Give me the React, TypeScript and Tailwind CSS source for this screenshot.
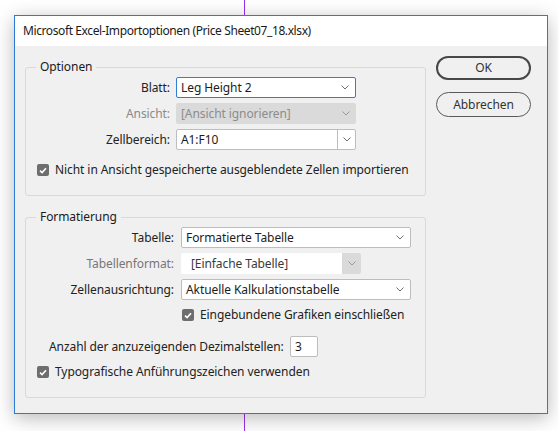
import React from "react";

function Chevron({ color = "#6b6b6b" }: { color?: string }) {
  return (
    <svg width="8" height="5" viewBox="0 0 8 5" className="shrink-0">
      <polyline points="0.5,0.5 4,4 7.5,0.5" fill="none" stroke={color} strokeWidth="1" />
    </svg>
  );
}

function Check() {
  return (
    <span className="w-[12px] h-[12px] rounded-[2px] bg-[#6e6e6e] flex items-center justify-center shrink-0">
      <svg width="8" height="7" viewBox="0 0 8 7">
        <polyline points="1,3.6 3.1,5.6 7,1.2" fill="none" stroke="#fff" strokeWidth="1.6" />
      </svg>
    </span>
  );
}

function Select({ value, width, focused }: { value: string; width: string; focused?: boolean }) {
  return (
    <div
      className={`${width} h-[21px] bg-white rounded-[2px] border flex items-center justify-between pl-[4px] pr-[6px] ${
        focused ? "border-[#2f7fd6]" : "border-[#bdbdbd]"
      }`}
    >
      <span className="text-[#1c1c1c]">{value}</span>
      <Chevron />
    </div>
  );
}

export default function App() {
  return (
    <div
      className="relative w-[558px] h-[431px] bg-white overflow-hidden pt-[15px] pl-[14px] text-[12px] leading-[16px] tracking-[-0.08px] text-[#222]"
      style={{ fontFamily: '"Noto Sans", "Open Sans", sans-serif' }}
    >
      {/* guide line behind the dialog */}
      <div className="absolute left-[244px] top-0 bottom-0 w-px bg-[#9b30f0]" />

      <div className="relative w-[534px] h-[399px] border border-[#2b7bd6] bg-[#f0f0f0] shadow-[0_4px_18px_rgba(0,0,0,0.28)] flex flex-col">
        <div className="h-[30px] bg-white pl-[8px] flex items-center text-[#1a1a1a] tracking-[-0.4px]">
          Microsoft Excel-Importoptionen (Price Sheet07_18.xlsx)
        </div>

        <div className="flex pl-[10px]">
          <div className="w-[401px] pt-[13px] flex flex-col gap-[13px]">
            {/* Optionen */}
            <fieldset className="h-[137px] border border-[#d9d9d9] rounded-[3px] pl-[10px]">
              <legend className="px-[4px] text-[#1a1a1a]">Optionen</legend>
              <div className="pt-[2px] flex flex-col gap-[5px]">
                <div className="flex items-center">
                  <span className="w-[134px] text-right">Blatt:</span>
                  <div className="ml-[6px]">
                    <Select value="Leg Height 2" width="w-[180px]" focused />
                  </div>
                </div>
                <div className="flex items-center">
                  <span className="w-[134px] text-right text-[#8a8a8a]">Ansicht:</span>
                  <div className="ml-[6px] w-[180px] h-[21px] rounded-[2px] bg-[#dadada] flex items-center justify-between pl-[5px] pr-[6px]">
                    <span className="text-[#8c8c8c]">[Ansicht ignorieren]</span>
                    <Chevron color="#9a9a9a" />
                  </div>
                </div>
                <div className="flex items-center">
                  <span className="w-[134px] text-right">Zellbereich:</span>
                  <div className="ml-[6px] w-[180px] h-[21px] rounded-[2px] border border-[#bdbdbd] bg-white flex">
                    <span className="flex-1 pl-[4px] flex items-center text-[#1c1c1c]">A1:F10</span>
                    <span className="w-[18px] border-l border-[#bdbdbd] flex items-center justify-center">
                      <Chevron />
                    </span>
                  </div>
                </div>
                <div className="flex items-center gap-[6px] ml-[1px] mt-[7px]">
                  <Check />
                  <span>Nicht in Ansicht gespeicherte ausgeblendete Zellen importieren</span>
                </div>
              </div>
            </fieldset>

            {/* Formatierung */}
            <fieldset className="h-[189px] border border-[#d9d9d9] rounded-[3px] pl-[10px]">
              <legend className="px-[4px] text-[#1a1a1a]">Formatierung</legend>
              <div className="pt-[2px] flex flex-col gap-[5px]">
                <div className="flex items-center">
                  <span className="w-[138px] text-right">Tabelle:</span>
                  <div className="ml-[7px]">
                    <Select value="Formatierte Tabelle" width="w-[230px]" />
                  </div>
                </div>
                <div className="flex items-center">
                  <span className="w-[138px] text-right text-[#777]">Tabellenformat:</span>
                  <div className="ml-[7px] w-[180px] h-[21px] rounded-[2px] bg-white flex">
                    <span className="flex-1 pl-[10px] flex items-center text-[#3a3a3a]">[Einfache Tabelle]</span>
                    <span className="w-[19px] bg-[#dadada] rounded-r-[2px] flex items-center justify-center">
                      <Chevron color="#9a9a9a" />
                    </span>
                  </div>
                </div>
                <div className="flex items-center">
                  <span className="w-[138px] text-right">Zellenausrichtung:</span>
                  <div className="ml-[7px]">
                    <Select value="Aktuelle Kalkulationstabelle" width="w-[230px]" />
                  </div>
                </div>
                <div className="flex items-center gap-[6px] ml-[146px] mt-[2px]">
                  <Check />
                  <span>Eingebundene Grafiken einschließen</span>
                </div>
                <div className="flex items-center ml-[13px] mt-[8px]">
                  <span className="w-[236px]">Anzahl der anzuzeigenden Dezimalstellen:</span>
                  <div className="ml-[5px] w-[28px] h-[21px] rounded-[2px] border border-[#bdbdbd] bg-white pl-[4px] flex items-center text-[#1c1c1c]">
                    3
                  </div>
                </div>
                <div className="flex items-center gap-[6px] ml-[1px] mt-[2px]">
                  <Check />
                  <span>Typografische Anführungszeichen verwenden</span>
                </div>
              </div>
            </fieldset>
          </div>

          {/* Buttons */}
          <div className="ml-[10px] pt-[10px] flex flex-col gap-[12px]">
            <button className="w-[95px] h-[24px] rounded-full border-2 border-[#474747] bg-[#f0f0f0] text-[#333] flex items-center justify-center">
              OK
            </button>
            <button className="w-[95px] h-[25px] rounded-full border border-[#5a5a5a] bg-[#f0f0f0] text-[#333] flex items-center justify-center">
              Abbrechen
            </button>
          </div>
        </div>
      </div>
    </div>
  );
}
